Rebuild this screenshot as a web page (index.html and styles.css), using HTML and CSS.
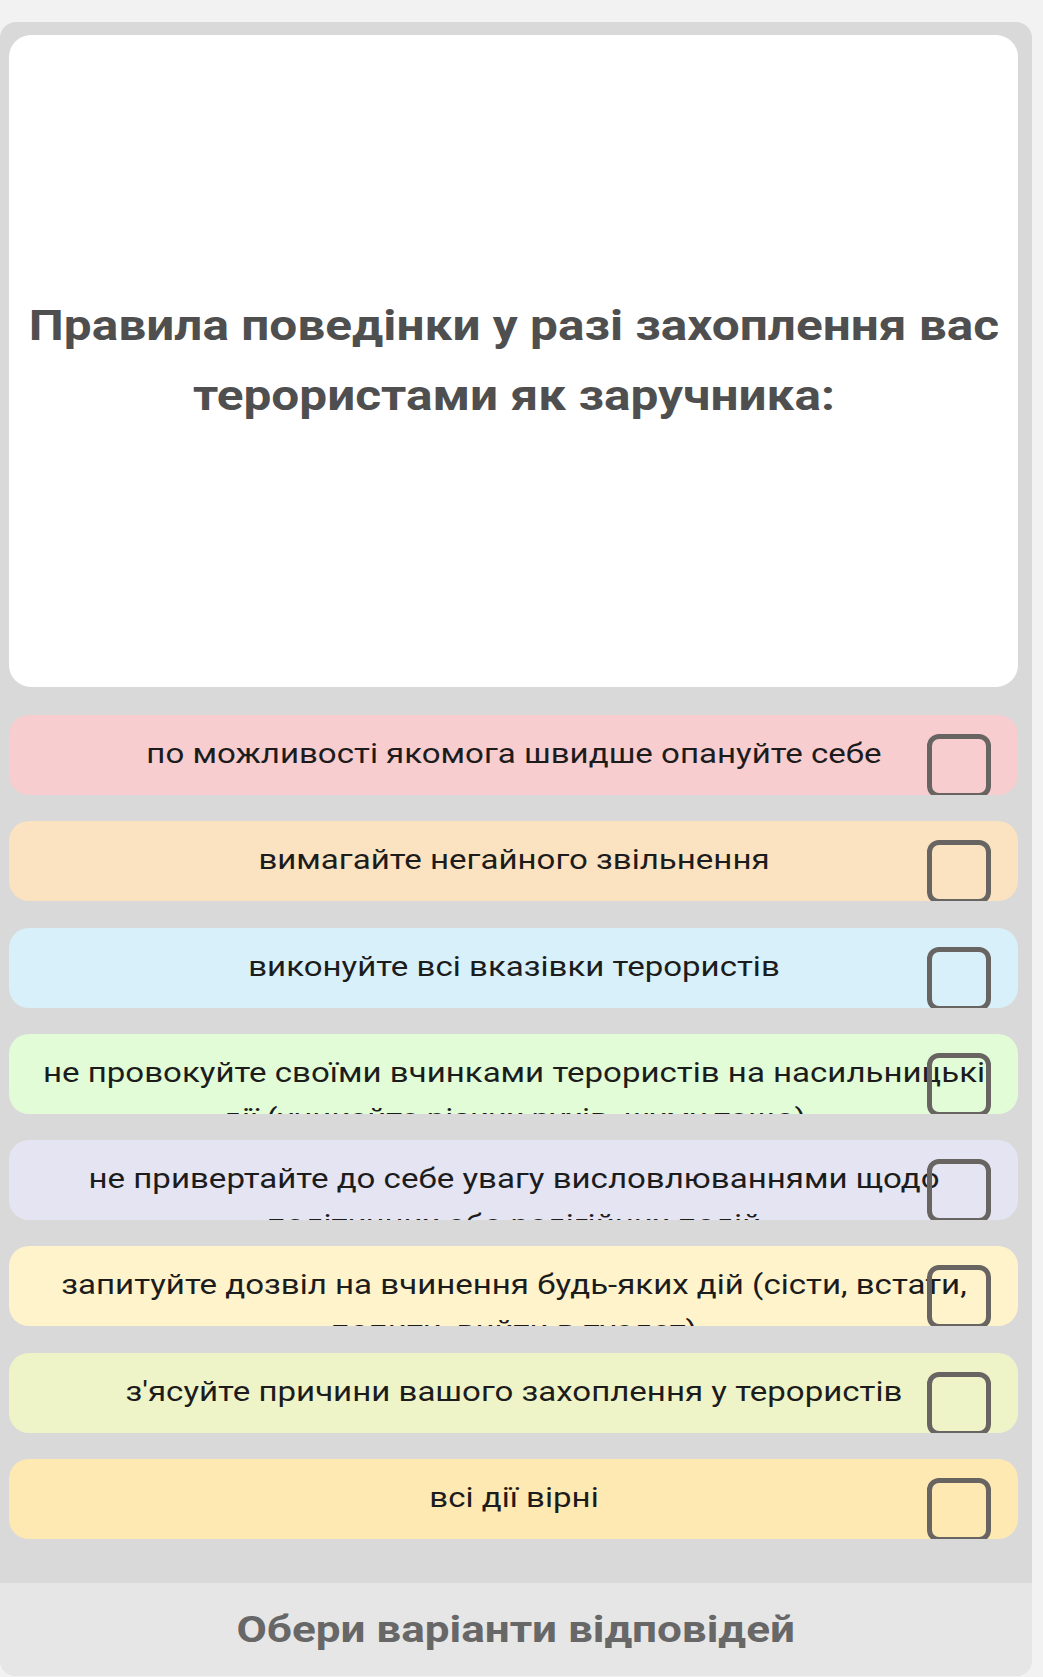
FILE: index.html
```html
<!DOCTYPE html>
<html lang="uk">
<head>
<meta charset="utf-8">
<title>Тест</title>
<link rel="stylesheet" href="styles.css">
</head>
<body>
<div class="quiz">
  <div class="question">
    <h1 class="question-text">Правила поведінки у разі захоплення вас терористами як заручника:</h1>
  </div>
  <div class="options">
    <div class="option opt-pink"><span class="option-text">по можливості якомога швидше опануйте себе</span><span class="check"></span></div>
    <div class="option opt-orange"><span class="option-text">вимагайте негайного звільнення</span><span class="check"></span></div>
    <div class="option opt-blue"><span class="option-text">виконуйте всі вказівки терористів</span><span class="check"></span></div>
    <div class="option opt-green"><span class="option-text">не провокуйте своїми вчинками терористів на насильницькі дії (уникайте різких рухів, шуму тощо)</span><span class="check"></span></div>
    <div class="option opt-lavender"><span class="option-text">не привертайте до себе увагу висловлюваннями щодо політичних або релігійних подій</span><span class="check"></span></div>
    <div class="option opt-cream"><span class="option-text">запитуйте дозвіл на вчинення будь-яких дій (сісти, встати, попити, вийти в туалет)</span><span class="check"></span></div>
    <div class="option opt-lime"><span class="option-text">з'ясуйте причини вашого захоплення у терористів</span><span class="check"></span></div>
    <div class="option opt-yellow"><span class="option-text">всі дії вірні</span><span class="check"></span></div>
  </div>
  <div class="footer"><span class="footer-text">Обери варіанти відповідей</span></div>
</div>
</body>
</html>
```
FILE: styles.css
```css
html, body {
  margin: 0;
  padding: 0;
}
body {
  background: #f2f2f2;
  font-family: Roboto, "Noto Sans", Arial, sans-serif;
}
.quiz {
  margin-top: 22px;
  width: 1032px;
  background: #d9d9d9;
  border-radius: 16px;
  overflow: hidden;
}
.question {
  margin: 13px 14px 0 9px;
  height: 652px;
  background: #ffffff;
  border-radius: 22px;
  display: flex;
  align-items: center;
  justify-content: center;
}
.question-text {
  margin: 0;
  width: 850px;
  font-size: 42px;
  line-height: 70px;
  font-weight: 700;
  color: #4f4f4f;
  text-align: center;
  transform: scaleX(1.18);
}
.options {
  display: flex;
  flex-direction: column;
  gap: 26.3px;
  padding: 28px 14px 44px 9px;
}
.option {
  position: relative;
  height: 80px;
  border-radius: 20px;
  overflow: hidden;
  box-sizing: border-box;
  padding-top: 16px;
  text-align: center;
}
.option-text {
  display: block;
  width: 814px;
  margin: 0 auto;
  font-size: 28px;
  line-height: 46px;
  color: #1c1c1c;
  transform: scaleX(1.18);
}
.check {
  position: absolute;
  top: 19px;
  right: 27px;
  width: 64px;
  height: 64px;
  box-sizing: border-box;
  border: 5px solid #686462;
  border-radius: 12px;
}
.opt-pink { background: #f7cdcf; }
.opt-orange { background: #fbe2c0; }
.opt-blue { background: #d8f0fa; }
.opt-green { background: #e2fcd7; }
.opt-lavender { background: #e4e4f3; }
.opt-cream { background: #fff3cc; }
.opt-lime { background: #eff4c8; }
.opt-yellow { background: #ffe9b2; }
.footer {
  height: 93px;
  background: #e6e6e6;
  display: flex;
  align-items: center;
  justify-content: center;
}
.footer-text {
  font-size: 37px;
  font-weight: 700;
  color: #676767;
  transform: scaleX(1.19);
}
```
